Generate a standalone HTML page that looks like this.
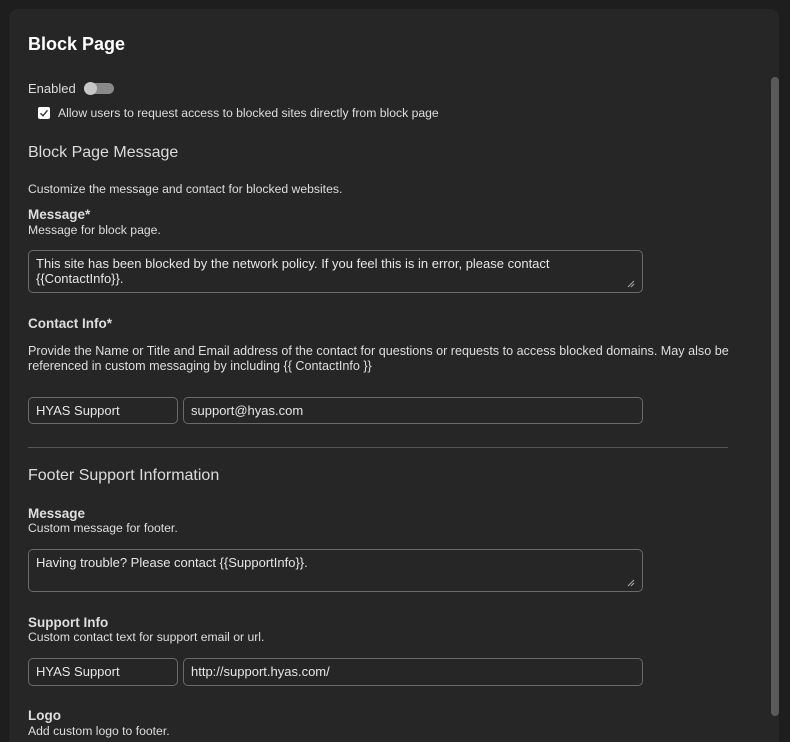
<!DOCTYPE html>
<html style="overflow:hidden;height:742px"><head><style>
body{margin:0;width:790px;height:742px;background:#1e1e1e;overflow:hidden;font-family:"Liberation Sans",Arial,sans-serif;color:#e6e6e6;position:relative}
.card{position:absolute;left:9px;top:9px;width:770px;height:733px;background:#262626;border-radius:9px 9px 0 0}
.t{position:absolute;white-space:nowrap;line-height:1}
.h1{font-size:18px;font-weight:bold;color:#fff}
.h2{font-size:16px;color:#dcdcdc}
.lb{font-size:13.5px;font-weight:bold;color:#dedede}
.s{font-size:12.2px;color:#dedede}
.box{position:absolute;border:1px solid #6a6a6a;border-radius:5px;box-sizing:border-box;background:#262626}
.in{font-size:13px;color:#e6e6e6}
.sb{position:absolute;left:771px;top:77px;width:8px;height:639px;background:#5a5a5a;border-radius:4px}
</style></head><body>
<div class="card"></div>
<div class="sb"></div>
<div class="t h1" style="left:28px;top:35px">Block Page</div>
<div class="t" style="left:28px;top:82px;font-size:13px;color:#ddd">Enabled</div>
<div style="position:absolute;left:84px;top:83px;width:30px;height:11px;border-radius:6px;background:#8a8a8a"></div>
<div style="position:absolute;left:84px;top:82px;width:13px;height:13px;border-radius:50%;background:#c8c8c8"></div>
<div style="position:absolute;left:38px;top:107px;width:12px;height:12px;border-radius:2px;background:#fff"></div>
<svg style="position:absolute;left:38px;top:107px" width="12" height="12"><path d="M2.5 6.2 L5 8.7 L9.5 3.3" stroke="#333" stroke-width="1.4" fill="none"/></svg>
<div class="t s" style="left:58px;top:107px">Allow users to request access to blocked sites directly from block page</div>
<div class="t h2" style="left:28px;top:145px">Block Page Message</div>
<div class="t s" style="left:28px;top:183px">Customize the message and contact for blocked websites.</div>
<div class="t lb" style="left:28px;top:208px">Message*</div>
<div class="t s" style="left:28px;top:224px">Message for block page.</div>
<div class="box" style="left:28px;top:250px;width:615px;height:43px"></div>
<div class="t in" style="left:36px;top:257px">This site has been blocked by the network policy. If you feel this is in error, please contact</div>
<div class="t in" style="left:36px;top:272px">{{ContactInfo}}.</div>
<svg style="position:absolute;left:627px;top:280px" width="8" height="8"><path d="M1 7L7 1M4 7L7 4" stroke="#aaa" stroke-width="1"/></svg>
<div class="t lb" style="left:28px;top:317px">Contact Info*</div>
<div class="t s" style="left:28px;top:345px;font-size:12.6px">Provide the Name or Title and Email address of the contact for questions or requests to access blocked domains. May also be</div>
<div class="t s" style="left:28px;top:360px;font-size:12.6px">referenced in custom messaging by including {{ ContactInfo }}</div>
<div class="box" style="left:28px;top:397px;width:150px;height:27px"></div>
<div class="t in" style="left:36px;top:404px">HYAS Support</div>
<div class="box" style="left:183px;top:397px;width:460px;height:27px"></div>
<div class="t in" style="left:191px;top:404px">support@hyas.com</div>
<div style="position:absolute;left:28px;top:447px;width:700px;height:1px;background:#555"></div>
<div class="t h2" style="left:28px;top:468px">Footer Support Information</div>
<div class="t lb" style="left:28px;top:507px">Message</div>
<div class="t s" style="left:28px;top:522px">Custom message for footer.</div>
<div class="box" style="left:28px;top:549px;width:615px;height:43px"></div>
<div class="t in" style="left:36px;top:556px">Having trouble? Please contact {{SupportInfo}}.</div>
<svg style="position:absolute;left:627px;top:579px" width="8" height="8"><path d="M1 7L7 1M4 7L7 4" stroke="#aaa" stroke-width="1"/></svg>
<div class="t lb" style="left:28px;top:616px">Support Info</div>
<div class="t s" style="left:28px;top:631px">Custom contact text for support email or url.</div>
<div class="box" style="left:28px;top:658px;width:150px;height:28px"></div>
<div class="t in" style="left:36px;top:665px">HYAS Support</div>
<div class="box" style="left:183px;top:658px;width:460px;height:28px"></div>
<div class="t in" style="left:191px;top:665px">http://support.hyas.com/</div>
<div class="t lb" style="left:28px;top:709px">Logo</div>
<div class="t s" style="left:28px;top:725px">Add custom logo to footer.</div>
</body></html>
